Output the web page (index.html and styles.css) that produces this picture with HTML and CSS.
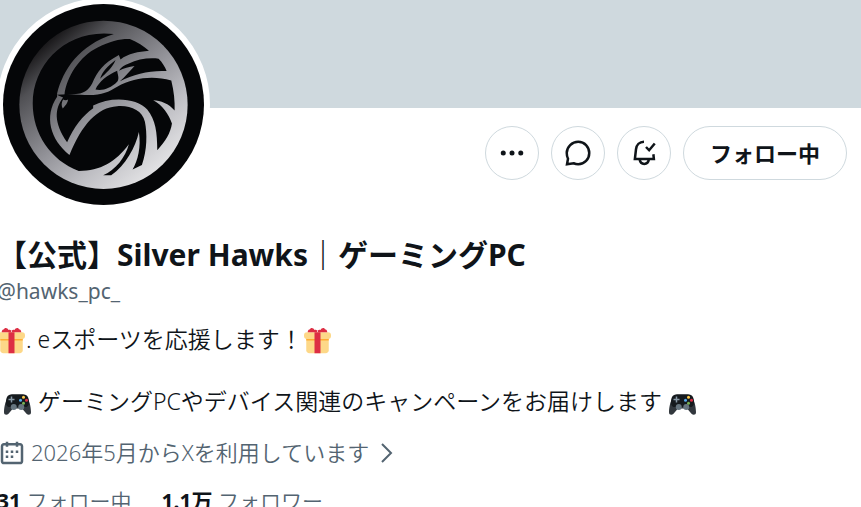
FILE: index.html
```
<!DOCTYPE html>
<html lang="ja">

<head>
    <title>【公式】Silver Hawks｜ゲーミングPC</title>
    <meta charset="UTF-8" />
    <link rel="stylesheet" href="styles.css">
</head>

<body>
    <svg class="sprite" width="0" height="0" aria-hidden="true">
        <symbol id="gift" viewBox="0 0 36 36">
            <path fill="#FDD888" d="M33 31c0 2.2-1.8 4-4 4H7c-2.2 0-4-1.8-4-4V14h30z" />
            <path fill="#FFAC33" d="M3 15h30v3H3z" />
            <rect fill="#FDD888" y="7" width="36" height="9" rx="4" />
            <path fill="#DD2E44" d="M14 7h8v28h-8z" />
            <path fill="#DD2E44" d="M17 7c1-3 3-4 5-3 1-3 5-4 6-1 3 0 3 4 3 4zM19 7c-1-3-3-4-5-3-1-3-5-4-6-1-3 0-3 4-3 4z" />
        </symbol>
        <symbol id="gamepad" viewBox="0 0 36 36">
            <path fill="#31373D" d="M5 12C1 17 0 27 0 31c0 4 4 4 6 2l6-7h12l6 7c2 2 6 2 6-2 0-4-1-14-5-19z" />
            <path fill="#151a1e" d="M3 14C4 8 8 7 12 7h12c4 0 8 1 9 7 1 5 0 9-3 10H6c-3-1-4-5-3-10z" />
            <path fill="none" stroke="#8899A6" stroke-width="2" d="M10 10v8M6 14h8" />
            <circle fill="#66757F" cx="13" cy="24" r="4" />
            <circle fill="#66757F" cx="23" cy="24" r="4" />
            <circle fill="#FFCC4D" cx="26" cy="11" r="2" />
            <circle fill="#55ACEE" cx="22" cy="15" r="2" />
            <circle fill="#DD2E44" cx="30" cy="15" r="2" />
            <circle fill="#77B255" cx="26" cy="19" r="2" />
        </symbol>
    </svg>

    <div class="cover"></div>
    <main class="profile">
        <div class="top">
            <a class="avatar" href="#" aria-label="Silver Hawks">
                <svg viewBox="8 12 602 602">
                    <defs>
                        <linearGradient id="silver" gradientUnits="userSpaceOnUse" x1="135" y1="135" x2="460" y2="520">
                            <stop offset="0" stop-color="#1c1b1d" />
                            <stop offset=".15" stop-color="#505054" />
                            <stop offset=".5" stop-color="#929298" />
                            <stop offset=".75" stop-color="#bebec3" />
                            <stop offset="1" stop-color="#e2e2e4" />
                        </linearGradient>
                    </defs>
                    <circle cx="309" cy="313" r="301" fill="#050608" />
                    <circle cx="309" cy="314" r="252" fill="url(#silver)" />
                    <g fill="#050608">
                        <path d="M340 102C200 85 97 190 97 310c0 90 53 170 138 202 65 0 110-27 150-80-10 38-40 78-77 93h24c43-30 73-85 83-130 7 45-3 85-19 113l28-14c16-44 16-94 9-129-8-35-43-50-83-47-60 4-105 54-143 146-57-45-77-115-37-174v-10c18-70 65-145 170-178z" />
                        <path d="M170 284l30-2 40 2c60 4 80-6 110-24 50-27 105-34 162-19 8 32 11 62 10 90-17-21-42-30-64-31 27 13 47 43 56 70-4 28-19 53-44 80 0-52-5-92-30-122-30-35-110-40-162-12v8c-33 24-56 54-78 102-40-58-38-100-12-134l-14-6z" />
                        <path d="M192 285c5-55 48-118 98-142 40-20 70-27 98-26 22 8 42 23 57 35-32 3-62 8-85 26l-5-13c-47 25-65 50-80 85-12 22-25 28-42 31z" />
                        <path d="M385 190c25-12 60-18 89-14 11 11 19 24 24 37-48-3-98 9-140 30 17-13 27-28 44-45-17 2-32 7-47 14 7-12 17-17 30-22z" />
                        <path d="M350 212c-30 13-55 33-65 56 20 5 45-3 65-23 8-10 0-25 0-33z" />
                        <path d="M345 180c-25 20-40 35-46 56 18-18 36-31 46-56z" />
                    </g>
                    <path fill="url(#silver)" d="M188 298c5 3 10 3 15 0-1 10-8 18-16 27-5-9-4-18 1-27z" />
                </svg>
            </a>
            <div class="actions">
                <button class="round" aria-label="もっと見る">
                    <svg class="icon" viewBox="0 0 24 24">
                        <circle cx="5" cy="12" r="2" />
                        <circle cx="12" cy="12" r="2" />
                        <circle cx="19" cy="12" r="2" />
                    </svg>
                </button>
                <button class="round" aria-label="メッセージ">
                    <svg class="icon line" viewBox="0 0 24 24">
                        <path d="M12.200 3c5 0 8.800 4 8.800 9s-3.800 9-8.800 9c-1.400 0-2.600-.3-3.700-.8L3.200 21l.8-4.400C3.300 15.200 3 13.600 3 12c0-5 4.200-9 9.200-9z" />
                    </svg>
                </button>
                <button class="round" aria-label="通知">
                    <svg class="icon line" viewBox="0 0 24 24">
                        <path d="M12 3C8.300 3 6 5.700 5.600 9l-.9 7.800h15.200l-.4-3.800" />
                        <path d="M8.500 17c.3 2.200 1.700 3.700 3.700 3.700s3.400-1.500 3.700-3.700" />
                        <path d="M13.600 7.200l2.500 2.600 4.500-5.400" />
                    </svg>
                </button>
                <button class="follow">フォロー中</button>
            </div>
        </div>

        <h1>【公式】Silver Hawks｜ゲーミングPC</h1>
        <div class="handle">@hawks_pc_</div>

        <div class="bio"><svg class="emoji"><use href="#gift" /></svg>. eスポーツを応援します！<svg class="emoji"><use href="#gift" /></svg>

 <svg class="emoji"><use href="#gamepad" /></svg> ゲーミングPCやデバイス関連のキャンペーンをお届けします <svg class="emoji"><use href="#gamepad" /></svg></div>

        <a class="joined" href="#">
            <svg class="calendar" viewBox="0 0 24 24">
                <path d="M7 4V3h2v1h6V3h2v1h1.500C19.890 4 21 5.120 21 6.500v12c0 1.380-1.110 2.500-2.500 2.500h-13C4.120 21 3 19.880 3 18.500v-12C3 5.120 4.120 4 5.500 4H7zm0 2H5.500c-.27 0-.5.22-.5.5v12c0 .28.23.5.5.5h13c.28 0 .5-.22.5-.5v-12c0-.28-.22-.5-.5-.5H17v1h-2V6H9v1H7V6zm0 6h2v-2H7v2zm0 4h2v-2H7v2zm4-4h2v-2h-2v2zm0 4h2v-2h-2v2zm4-4h2v-2h-2v2z" />
            </svg>
            <span>2026年5月からXを利用しています</span>
            <svg class="chevron" viewBox="0 0 12 20">
                <path d="M1 1l9 9-9 9" />
            </svg>
        </a>

        <div class="counts">
            <a href="#"><b>31</b> フォロー中</a>
            <a href="#"><b>1.1万</b> フォロワー</a>
        </div>
    </main>
</body>

</html>
```
FILE: styles.css
```
html {
    overflow: hidden;
}

body {
    margin: 0;
    background-color: white;
    color: #0f1419;
    font-family: "Noto Sans", "Noto Sans CJK JP", sans-serif;
    font-size: 22px;
    line-height: 31px;
}

a {
    color: inherit;
    text-decoration: none;
}

.sprite {
    position: absolute;
}

.cover {
    height: 108px;
    background-color: #cfd9de;
}

.profile {
    margin-left: -3px;
    padding-right: 14px;
}

.top {
    display: flex;
    justify-content: space-between;
    align-items: flex-start;
}

.avatar {
    width: 201px;
    height: 201px;
    margin-top: -110px;
    border: 6px solid white;
    border-radius: 50%;
    background-color: white;
}

.avatar svg {
    display: block;
    width: 100%;
    height: 100%;
}

.actions {
    display: flex;
    gap: 12px;
    padding-top: 18px;
}

button {
    display: flex;
    align-items: center;
    justify-content: center;
    box-sizing: border-box;
    height: 54px;
    padding: 0;
    border: 1px solid #cfd9de;
    border-radius: 27px;
    background-color: white;
    color: #0f1419;
    font: inherit;
    cursor: pointer;
}

.round {
    width: 54px;
}

.follow {
    padding: 0 26px;
    font-weight: bold;
}

button:hover {
    background-color: #e7e7e8;
}

.icon {
    width: 30px;
    height: 30px;
    fill: #0f1419;
}

.line {
    fill: none;
    stroke: #0f1419;
    stroke-width: 2;
}

h1 {
    margin: 26px 0 0;
    font-size: 30px;
    line-height: 36px;
    font-weight: bold;
}

.handle {
    margin-top: 3px;
    color: #536471;
    font-size: 21px;
}

.bio {
    margin-top: 17px;
    font-size: 23px;
    font-weight: 350;
    white-space: pre-wrap;
}

.emoji {
    width: 27px;
    height: 27px;
    margin: 0 1px;
    vertical-align: -6px;
}

.joined {
    display: flex;
    align-items: center;
    margin-top: 20px;
    color: #536471;
    font-weight: 350;
}

.calendar {
    width: 30px;
    height: 30px;
    margin-right: 4px;
    fill: #536471;
}

.chevron {
    width: 12px;
    height: 20px;
    margin-left: 12px;
    fill: none;
    stroke: #536471;
    stroke-width: 2;
}

.counts {
    display: flex;
    gap: 30px;
    margin-top: 18px;
    color: #536471;
    font-size: 21px;
    font-weight: 350;
}

.counts b {
    color: #0f1419;
    font-weight: bold;
}
```
